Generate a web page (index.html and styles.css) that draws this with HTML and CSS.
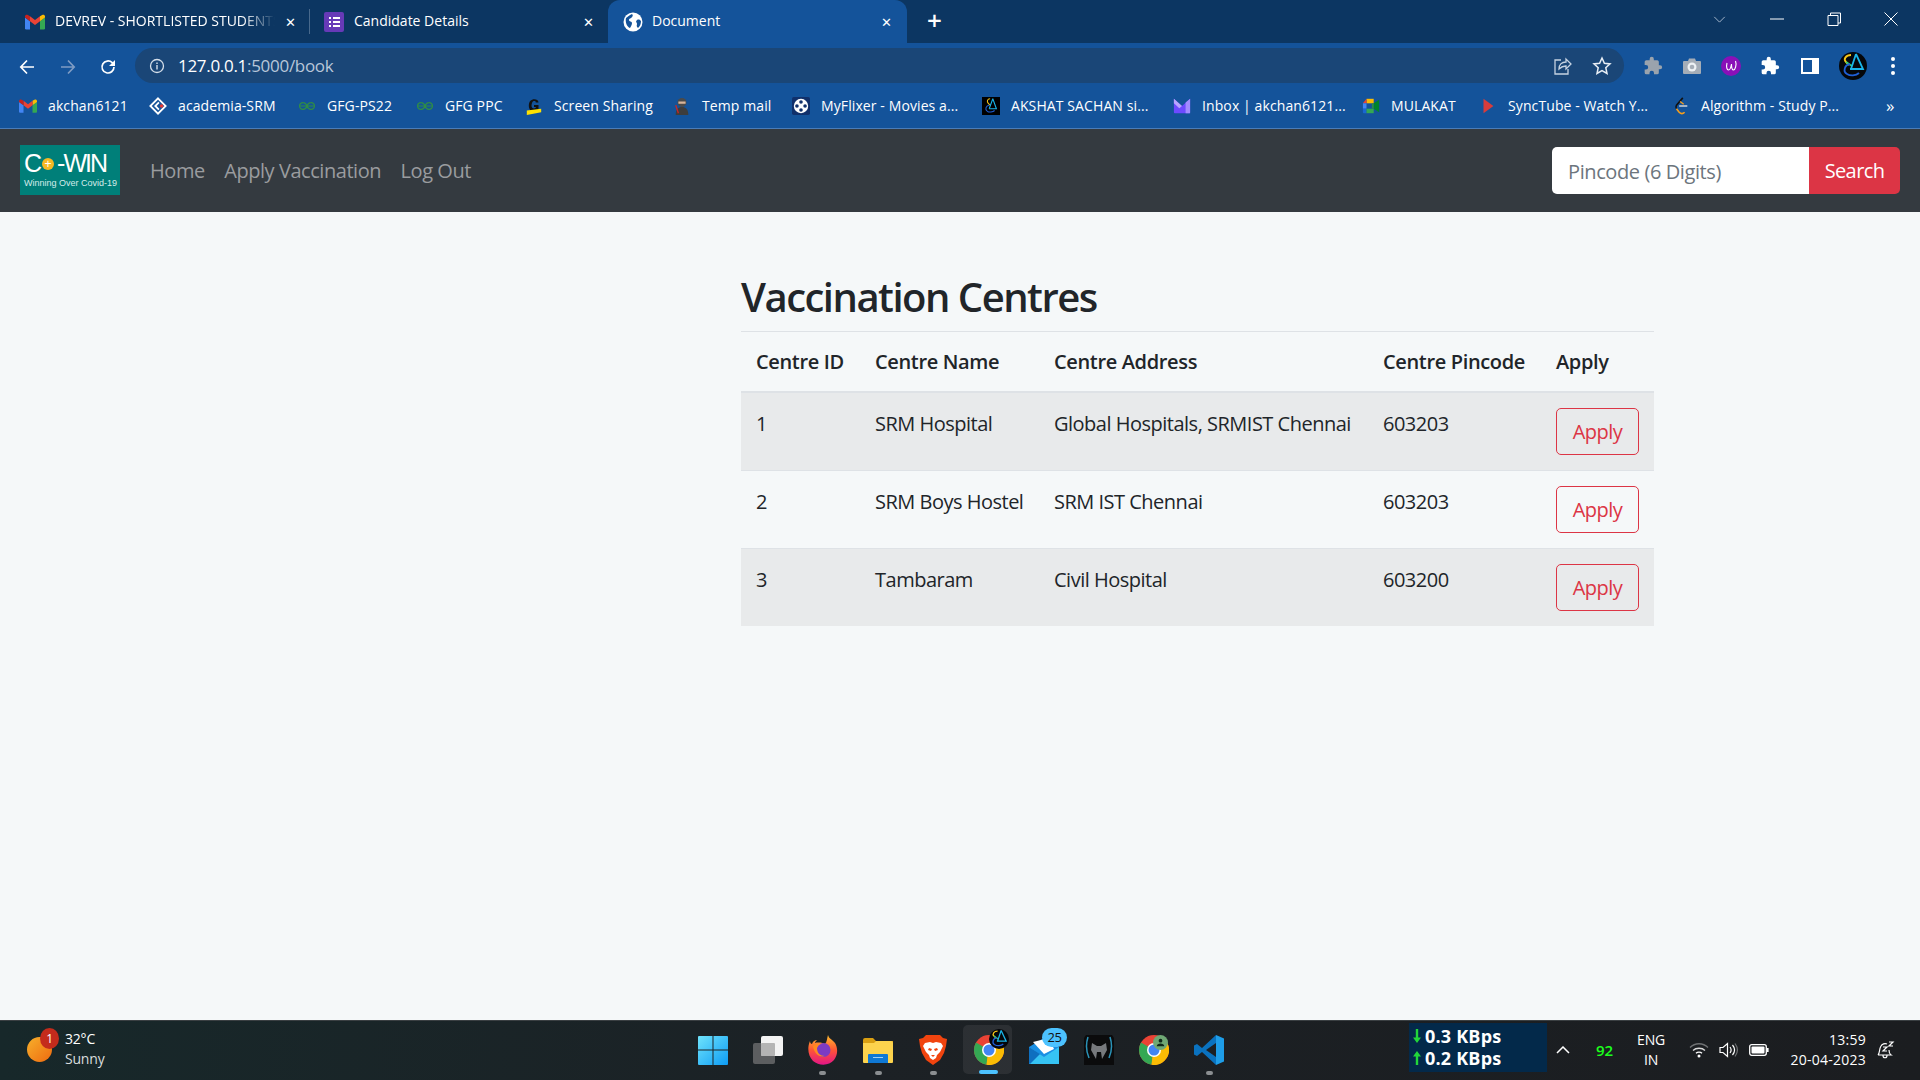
FILE: index.html
```html
<!DOCTYPE html>
<html lang="en">
<head>
    <meta charset="UTF-8">
    <meta name="viewport" content="width=device-width, initial-scale=1.0">
    <title>Document</title>
    <link rel="stylesheet" href="styles.css">
</head>
<body>
    <svg class="sprite" width="0" height="0">
        <symbol id="gmail" viewBox="0 0 24 18">
            <path fill="#4285f4" d="M1.500 18H6V8L0 3.500v13A1.500 1.500 0 0 0 1.500 18z"/>
            <path fill="#34a853" d="M18 18h4.500a1.500 1.500 0 0 0 1.500-1.500v-13L18 8z"/>
            <path fill="#fbbc04" d="M18 2v6l6-4.500V2.200C24 .5 22 -.4 20.600 .6z"/>
            <path fill="#ea4335" d="M6 8V2l6 4.500L18 2v6l-6 4.500z"/>
            <path fill="#c5221f" d="M0 2.200v1.300L6 8V2L3.400 .6C2 -.4 0 .5 0 2.200z"/>
        </symbol>
        <symbol id="puzzle" viewBox="0 0 24 24">
            <path fill="currentColor" d="M20.500 11H19V7a2 2 0 0 0-2-2h-4V3.500a2.500 2.500 0 0 0-5 0V5H4a2 2 0 0 0-2 2v3.800h1.500a2.700 2.700 0 0 1 0 5.400H2V20a2 2 0 0 0 2 2h3.800v-1.500a2.700 2.700 0 0 1 5.400 0V22H17a2 2 0 0 0 2-2v-4h1.500a2.500 2.500 0 0 0 0-5z"/>
        </symbol>
        <symbol id="gfg" viewBox="0 0 24 12">
            <path fill="none" stroke="#2f8d46" stroke-width="1.600" d="M1.500 6h21M12 6c-1-3-3-4.500-5.200-4.500A4.500 4.500 0 0 0 2 6a4.500 4.500 0 0 0 4.800 4.500C9 10.500 11 9 12 6zm0 0c1-3 3-4.500 5.200-4.500A4.500 4.500 0 0 1 22 6a4.500 4.500 0 0 1-4.800 4.500C15 10.500 13 9 12 6z"/>
        </symbol>
        <symbol id="sa" viewBox="0 0 28 28">
            <circle cx="14" cy="14" r="14" fill="#05070a"/>
            <path fill="none" stroke="#f5c518" stroke-width="1.800" d="M12 3C7 3 4 7 7 10l3 3"/>
            <path fill="none" stroke="#2ecc71" stroke-width="1.800" d="M7 10l6 4"/>
            <path fill="none" stroke="#19b5e8" stroke-width="1.800" d="M17 2l-5 15M17 2l7 15H11"/>
            <path fill="none" stroke="#1f5fd6" stroke-width="1.800" d="M11 12c-6 1-7 8-3 10 3 2 9 2 12-1"/>
        </symbol>
        <symbol id="chrome" viewBox="0 0 30 30">
            <circle cx="15" cy="15" r="15" fill="#ea4335"/>
            <path fill="#34a853" d="M2 7.500A15 15 0 0 0 12.500 29.800L15 15z"/>
            <path fill="#fbbc04" d="M28 7.500H15L12.500 29.800A15 15 0 0 0 28 7.500z"/>
            <circle cx="15" cy="15" r="7" fill="#fff"/>
            <circle cx="15" cy="15" r="5.500" fill="#4285f4"/>
        </symbol>
        <symbol id="arrow" viewBox="0 0 8 14">
            <path fill="currentColor" d="M2.800 0h2.400v8.500H8L4 14 0 8.500h2.800z"/>
        </symbol>
    </svg>

    <div class="browser">
        <div class="tabstrip">
            <div class="tab tab-first">
                <svg class="tab-icon"><use href="#gmail"/></svg>
                <span class="tab-title tab-title-fade">DEVREV - SHORTLISTED STUDENTS</span>
                <span class="tab-close">&#10005;</span>
            </div>
            <div class="tab-sep"></div>
            <div class="tab tab-second">
                <svg class="tab-icon" viewBox="0 0 20 20"><rect width="20" height="20" rx="2" fill="#673ab7"/><path fill="#fff" d="M5 5h2v2H5zM9 5h7v2H9zM5 9h2v2H5zM9 9h7v2H9zM5 13h2v2H5zM9 13h7v2H9z"/></svg>
                <span class="tab-title">Candidate Details</span>
                <span class="tab-close">&#10005;</span>
            </div>
            <div class="tab tab-active">
                <svg class="tab-icon" viewBox="0 0 20 20"><circle cx="10" cy="10" r="9.500" fill="#fff"/><path fill="#14539a" d="M3 6c2-1 3-3 6-4 1 1 1 2 0 3-1 2-3 1-3 3 0 2 3 1 3 3 0 2-1 3-2 5C4 15 2 10 3 6zM14 8c2-1 3 0 4 1 0 3-1 5-3 7-2-2-1-3-1-4 0-2-2-2 0-4z"/></svg>
                <span class="tab-title">Document</span>
                <span class="tab-close">&#10005;</span>
            </div>
            <span class="tab-new">+</span>
            <div class="window-btns">
                <svg viewBox="0 0 14 8" class="win-chevron"><path fill="none" stroke="#b7c6d8" d="M1 1l6 6 6-6"/></svg>
                <svg viewBox="0 0 14 14" class="win-btn"><path stroke="#fff" d="M0 7h14"/></svg>
                <svg viewBox="0 0 14 14" class="win-btn"><path fill="none" stroke="#fff" d="M1 3.500h10v10H1zM3.500 3.500V1H13.500v10H11"/></svg>
                <svg viewBox="0 0 14 14" class="win-btn"><path stroke="#fff" d="M.5.500l13 13M13.500.500l-13 13"/></svg>
            </div>
        </div>

        <div class="toolbar">
            <div class="nav-btns">
                <svg viewBox="0 0 16 16"><path fill="none" stroke="#fff" stroke-width="1.700" d="M15 8H2M8 1.500L1.800 8 8 14.500"/></svg>
                <svg viewBox="0 0 16 16"><path fill="none" stroke="#7f9cc4" stroke-width="1.700" d="M1 8h13M8 1.500L14.200 8 8 14.500"/></svg>
                <svg viewBox="0 0 16 16"><path fill="none" stroke="#fff" stroke-width="1.700" d="M14 8a6 6 0 1 1-1.800-4.300L14 5.500"/><path fill="#fff" d="M15 1v6H9z"/></svg>
            </div>
            <div class="omnibox">
                <svg class="omni-info" viewBox="0 0 16 16"><circle cx="8" cy="8" r="6.500" fill="none" stroke="#d5dfea" stroke-width="1.300"/><path fill="#d5dfea" d="M7.300 7h1.400v4.500H7.300zM7.300 4.500h1.400v1.400H7.300z"/></svg>
                <span class="omni-url">127.0.0.1<span class="omni-path">:5000/book</span></span>
                <svg class="omni-icon" viewBox="0 0 20 20"><path fill="none" stroke="#c6d3e2" stroke-width="1.300" d="M9 4H3v14h13v-5M7 13c0-5 3-7 7-7V3l5 5-5 5v-3c-3 0-5 1-7 3z"/></svg>
                <svg class="omni-icon omni-star" viewBox="0 0 20 20"><path fill="none" stroke="#e8eef5" stroke-width="1.500" d="M10 2l2.400 5.300 5.600.6-4.200 3.800 1.200 5.700L10 14.500l-5 2.900 1.200-5.700L2 7.900l5.600-.6z"/></svg>
            </div>
            <div class="ext-btns">
                <svg class="ext-grey"><use href="#puzzle"/></svg>
                <svg viewBox="0 0 20 20"><path fill="#a5adb7" d="M2 5h4l1-2.500h6L14 5h4a1 1 0 0 1 1 1v11a1 1 0 0 1-1 1H2a1 1 0 0 1-1-1V6a1 1 0 0 1 1-1z"/><circle cx="10" cy="11" r="4.500" fill="#eef1f4"/><circle cx="10" cy="11" r="2.300" fill="#a5adb7"/></svg>
                <svg viewBox="0 0 20 20"><circle cx="10" cy="10" r="10" fill="#8a10b8"/><path fill="none" stroke="#fff" stroke-width="1.100" d="M6 7c-1 4 0 7 1.500 7S10 11 10.500 8c0 4 .5 6 2 6S16 9 14.500 5"/></svg>
                <svg class="ext-white"><use href="#puzzle"/></svg>
                <svg viewBox="0 0 20 20"><path fill="#fff" d="M1 2h18v16H1zM3 4v12h9V4z"/></svg>
                <svg class="ext-avatar"><use href="#sa"/></svg>
                <svg class="ext-dots" viewBox="0 0 6 20"><circle cx="3" cy="3" r="2" fill="#fff"/><circle cx="3" cy="10" r="2" fill="#fff"/><circle cx="3" cy="17" r="2" fill="#fff"/></svg>
            </div>
        </div>

        <div class="bookmarks">
            <div class="bookmark"><svg><use href="#gmail"/></svg><span>akchan6121</span></div>
            <div class="bookmark"><svg viewBox="0 0 20 20"><path fill="none" stroke="#fff" stroke-width="2" d="M10 1.500L18.500 10 10 18.500 1.500 10z"/><path fill="none" stroke="#fff" stroke-width="2" d="M11 6l-4 4 4 4"/><circle cx="14" cy="10" r="2" fill="#e53935"/></svg><span>academia-SRM</span></div>
            <div class="bookmark"><svg><use href="#gfg"/></svg><span>GFG-PS22</span></div>
            <div class="bookmark"><svg><use href="#gfg"/></svg><span>GFG PPC</span></div>
            <div class="bookmark"><svg viewBox="0 0 20 20"><path fill="#111" d="M15 6h-3c0-2-3-2-4 0-1 2-1 5 0 6 1 1 3 1 4 0v-1h-2V9h5v7H8C3 15 3 4 8 3c3-1 7 0 7 3z"/><path fill="#ffe100" d="M2 15l16-2v4L2 20z"/></svg><span>Screen Sharing</span></div>
            <div class="bookmark"><svg viewBox="0 0 20 20"><circle cx="10" cy="6" r="5" fill="#4a4a4a"/><rect x="6" y="5" width="8" height="2.500" fill="#d9b59a"/><path fill="#3d3d3d" d="M3 20c0-7 3-9 7-9s7 2 7 9z"/><path stroke="#c62828" stroke-width="1.500" d="M3 9l3 9"/></svg><span>Temp mail</span></div>
            <div class="bookmark"><svg viewBox="0 0 20 20"><rect width="20" height="20" rx="2" fill="#10306b"/><circle cx="10" cy="10" r="8" fill="#fff"/><circle cx="10" cy="5.500" r="2" fill="#10306b"/><circle cx="10" cy="14.500" r="2" fill="#10306b"/><circle cx="5.500" cy="10" r="2" fill="#10306b"/><circle cx="14.500" cy="10" r="2" fill="#10306b"/></svg><span>MyFlixer - Movies a...</span></div>
            <div class="bookmark"><svg viewBox="0 0 20 20"><rect width="20" height="20" fill="#000"/><path fill="none" stroke="#f5c518" stroke-width="1.200" d="M9 2C6 2 5 5 7 7l2 2"/><path fill="none" stroke="#19b5e8" stroke-width="1.200" d="M12 2L8 13M12 2l4 11H8"/><path fill="none" stroke="#1f5fd6" stroke-width="1.200" d="M8 9c-4 1-5 5-2 7 2 1 6 1 8-1"/></svg><span>AKSHAT SACHAN si...</span></div>
            <div class="bookmark"><svg viewBox="0 0 20 20"><path fill="#6d4aff" d="M1 2l9 8 9-8v15a1 1 0 0 1-1 1H2a1 1 0 0 1-1-1z"/><path fill="#b8a4ff" d="M1 2l9 8-3 2.500L1 7z"/><path fill="#a28bff" d="M14 6l5-4v16h-5z"/></svg><span>Inbox | akchan6121...</span></div>
            <div class="bookmark"><svg viewBox="0 0 20 20"><path fill="#fbbc04" d="M5 2h8v5H5z"/><path fill="#ea4335" d="M5 2v5H1z"/><path fill="#4285f4" d="M1 7h4v6H1z"/><path fill="#1967d2" d="M1 13h4v5H2a1 1 0 0 1-1-1z"/><path fill="#34a853" d="M5 13h8v5H5z"/><path fill="#00832d" d="M13 7l6-4v14l-6-4z"/><path fill="#2f8d46" d="M11 7h2v6h-2z"/></svg><span>MULAKAT</span></div>
            <div class="bookmark"><svg viewBox="0 0 20 20"><path fill="#d73c3c" d="M5 2l11 8-11 8z"/></svg><span>SyncTube - Watch Y...</span></div>
            <div class="bookmark"><svg viewBox="0 0 20 20"><path fill="none" stroke="#111" stroke-width="1.800" d="M12 1L5 9c-1 2-1 3 0 4"/><path fill="none" stroke="#f89f1b" stroke-width="1.800" d="M5 13l3 4c2 2 4 2 6 0"/><path fill="none" stroke="#c7ccd3" stroke-width="1.800" d="M8 10h9"/><path fill="none" stroke="#f89f1b" stroke-width="1.500" d="M9 5l4 3"/></svg><span>Algorithm - Study P...</span></div>
            <span class="bookmark-more">&raquo;</span>
        </div>
    </div>

    <nav class="navbar">
        <div class="logo">
            <div class="logo-name">C<span class="logo-plus">+</span>-WIN</div>
            <div class="logo-sub">Winning Over Covid-19</div>
        </div>
        <ul class="nav-links">
            <li>Home</li>
            <li>Apply Vaccination</li>
            <li>Log Out</li>
        </ul>
        <form class="search">
            <input class="search-input" type="text" placeholder="Pincode (6 Digits)">
            <button class="search-btn" type="button">Search</button>
        </form>
    </nav>

    <main class="content">
        <h1>Vaccination Centres</h1>
        <table class="centres">
            <thead>
                <tr>
                    <th class="col-id">Centre ID</th>
                    <th class="col-name">Centre Name</th>
                    <th class="col-address">Centre Address</th>
                    <th class="col-pin">Centre Pincode</th>
                    <th>Apply</th>
                </tr>
            </thead>
            <tbody>
                <tr>
                    <td>1</td>
                    <td>SRM Hospital</td>
                    <td>Global Hospitals, SRMIST Chennai</td>
                    <td>603203</td>
                    <td><button class="apply-btn" type="button">Apply</button></td>
                </tr>
                <tr>
                    <td>2</td>
                    <td>SRM Boys Hostel</td>
                    <td>SRM IST Chennai</td>
                    <td>603203</td>
                    <td><button class="apply-btn" type="button">Apply</button></td>
                </tr>
                <tr>
                    <td>3</td>
                    <td>Tambaram</td>
                    <td>Civil Hospital</td>
                    <td>603200</td>
                    <td><button class="apply-btn" type="button">Apply</button></td>
                </tr>
            </tbody>
        </table>
    </main>

    <footer class="taskbar">
        <div class="weather">
            <div class="weather-icon">
                <span class="weather-sun"></span>
                <span class="weather-badge">1</span>
            </div>
            <div class="weather-text">
                <div>32&deg;C</div>
                <div class="weather-sub">Sunny</div>
            </div>
        </div>

        <div class="task-icons">
            <div class="task-cell">
                <svg viewBox="0 0 30 30"><defs><linearGradient id="winblue" x1="0" y1="0" x2="1" y2="1"><stop offset="0" stop-color="#6fe3fb"/><stop offset="1" stop-color="#0d9cf5"/></linearGradient></defs><path fill="url(#winblue)" d="M1 1h13.500v13.500H0V2a1 1 0 0 1 1-1zM15.500 1H29a1 1 0 0 1 1 1v12.500H15.500zM0 15.500h14.500V30H1a1 1 0 0 1-1-1zM15.500 15.500H30V29a1 1 0 0 1-1 1H15.500z"/></svg>
            </div>
            <div class="task-cell">
                <svg viewBox="0 0 30 30"><rect y="8" width="22" height="21" rx="2" fill="#5c5e60"/><rect x="8" y="1" width="22" height="20" rx="2" fill="#f3f3f3"/><rect x="8" y="8" width="14" height="13" rx="1" fill="#b4b4b4"/></svg>
            </div>
            <div class="task-cell task-dot">
                <svg viewBox="0 0 30 30"><defs><linearGradient id="ffox" x1="0" y1="0" x2="0" y2="1"><stop offset="0" stop-color="#ffbd2e"/><stop offset=".5" stop-color="#ff5634"/><stop offset="1" stop-color="#e31587"/></linearGradient></defs><path fill="url(#ffox)" d="M20 0c1 4 4 4 7 8 3 5 3 12-1 17-5 6-15 6-21 1C0 21-1 13 2 6c0 2 1 3 2 3 1-3 3-4 5-4-1 1-2 2-2 3 3-1 9 0 10 1 2-2 2-6 3-9z"/><circle cx="15.500" cy="15" r="7" fill="#7c3bc4"/><path fill="#ff8a1f" d="M5 11c3-2 6-3 9-2-3 0-4 2-5 4 0 5 3 8 8 8-6 2-11-3-12-10z"/></svg>
            </div>
            <div class="task-cell task-dot">
                <svg viewBox="0 0 30 30"><path fill="#d99f12" d="M0 5a2 2 0 0 1 2-2h8l3 3h17v8H0z"/><path fill="#fcd34d" d="M0 8h11l2-2h15a2 2 0 0 1 2 2v19a1 1 0 0 1-1 1H1a1 1 0 0 1-1-1z"/><path fill="#0f78d4" d="M5 20a1 1 0 0 1 1-1h18a1 1 0 0 1 1 1v8H5z"/><path stroke="#9ed0f5" stroke-width="1" d="M10 22.500h10"/></svg>
            </div>
            <div class="task-cell task-dot">
                <svg viewBox="0 0 30 30"><path fill="#f1440f" d="M8 0h14l3 3 4 1-1 7-2 7-4 7-7 5-7-5-4-7-2-7-1-7 4-1z"/><path fill="#fff" d="M7 8l5-1 3 1 3-1 5 1 2 3-3 6-3 3-1 3-3 2-3-2-1-3-3-3-3-6z"/><path fill="#f1440f" d="M11 13l3 1-1 2-3-1zM19 13l-3 1 1 2 3-1zM13 20h4l-2 2z"/></svg>
            </div>
            <div class="task-cell task-active">
                <svg><use href="#chrome"/></svg>
                <svg class="task-over task-over-sa"><use href="#sa"/></svg>
            </div>
            <div class="task-cell">
                <svg viewBox="0 0 30 30"><path fill="#1a8fe3" d="M0 12L15 3l15 9v16a1 1 0 0 1-1 1H1a1 1 0 0 1-1-1z"/><path fill="#fff" d="M4 7l16-4 5 11-10 5z"/><path fill="#36c3f3" d="M0 12l15 10 15-10v17H1a1 1 0 0 1-1-1z"/><path fill="#0f6fc0" d="M0 12v16a1 1 0 0 0 1 1l10-10z"/></svg>
                <span class="mail-badge">25</span>
            </div>
            <div class="task-cell">
                <svg viewBox="0 0 30 30"><path fill="#0b0b0c" d="M2 0h26l2 3v27H0V3z"/><path fill="none" stroke="#2a93b8" stroke-width="1.500" d="M4 2C2 8 2 16 5 23M26 2c2 6 2 14-1 21"/><path fill="#77797c" d="M8 8l5 3h4l5-3 1 7-5 9-1-7h-4l-1 7-5-9z"/></svg>
            </div>
            <div class="task-cell">
                <svg><use href="#chrome"/></svg>
                <svg class="task-over task-over-user" viewBox="0 0 16 16"><circle cx="8" cy="8" r="8" fill="#6fa874"/><circle cx="8" cy="6" r="2" fill="#10281a"/><path fill="#10281a" d="M4 12c0-2 2-3 4-3s4 1 4 3z"/></svg>
            </div>
            <div class="task-cell task-dot">
                <svg viewBox="0 0 30 30"><path fill="#0a72bf" d="M22 0L8 13 3 9 0 10.500v9L3 21l5-4 14 13v-8l-10-7 10-7z"/><path fill="#1e9de8" d="M22 0l8 3.500v23L22 30z"/></svg>
            </div>
        </div>

        <div class="net-speed">
            <div class="net-row"><svg class="net-arrow"><use href="#arrow"/></svg>0.3 KBps</div>
            <div class="net-row"><svg class="net-arrow net-up"><use href="#arrow"/></svg>0.2 KBps</div>
        </div>

        <div class="tray">
            <svg class="tray-chevron" viewBox="0 0 14 8"><path fill="none" stroke="#fff" stroke-width="1.500" d="M1 7l6-6 6 6"/></svg>
            <span class="tray-num">92</span>
            <div class="tray-lang"><div>ENG</div><div>IN</div></div>
            <svg class="tray-wifi" viewBox="0 0 20 16"><path fill="none" stroke="#6f7173" stroke-width="1.300" d="M1 5.500c5-5 13-5 18 0"/><path fill="none" stroke="#d9d9d9" stroke-width="1.300" d="M4 8.500c3-3 9-3 12 0"/><path fill="none" stroke="#fff" stroke-width="1.300" d="M7 11.300c1.500-1.500 4.500-1.500 6 0"/><circle cx="10" cy="14" r="1.500" fill="#fff"/></svg>
            <svg class="tray-sound" viewBox="0 0 20 16"><path fill="none" stroke="#fff" stroke-width="1.200" d="M1 5.500h3L8.500 1.500v13L4 10.500H1zM11 5c1.500 2 1.500 4 0 6M13.500 3c2.500 3 2.500 7 0 10"/><path fill="none" stroke="#6f7173" stroke-width="1.200" d="M16 1.500c3 4 3 9 0 13"/></svg>
            <svg class="tray-battery" viewBox="0 0 20 12"><rect x=".7" y=".7" width="16.600" height="10.600" rx="2" fill="none" stroke="#fff" stroke-width="1.300"/><rect x="2.500" y="2.500" width="13" height="7" rx="1" fill="#fff"/><rect x="18" y="4" width="1.600" height="4" fill="#fff"/></svg>
            <div class="tray-clock"><div>13:59</div><div>20-04-2023</div></div>
            <svg class="tray-bell" viewBox="0 0 20 20"><path fill="none" stroke="#fff" stroke-width="1.200" d="M3 15c2-2 1-6 3-9 1-2 4-3 6-2M3 15h13c-1.500-1-2-3-2-5M8 15.500c0 3 4 3 4 0"/><path fill="none" stroke="#fff" stroke-width="1.200" d="M8 7h4l-4 4h4M14 2h4l-4 4h4"/></svg>
        </div>
    </footer>
</body>
</html>
```

FILE: styles.css
```css
* {
    box-sizing: border-box;
}
body {
    font-family: "Open Sans", "Noto Sans", sans-serif;
    margin: 0;
    padding: 0;
    height: 1080px;
    overflow: hidden;
    display: flex;
    flex-direction: column;
    background-color: #f5f8f9;
    color: #212529;
}
.sprite {
    position: absolute;
}

/* browser chrome */
.tabstrip {
    height: 43px;
    padding-left: 8px;
    background-color: #0c3662;
    display: flex;
    align-items: stretch;
    color: white;
    font-size: 14px;
}
.tab {
    width: 299px;
    padding: 0 13px 0 17px;
    display: flex;
    align-items: center;
    gap: 10px;
}
.tab-first {
    padding-right: 9px;
}
.tab-second {
    width: 297px;
    padding: 0 12px 0 13px;
}
.tab-active {
    background-color: #14539a;
    border-radius: 12px 12px 0 0;
    padding-left: 15px;
    gap: 9px;
}
.tab-icon {
    width: 20px;
    height: 20px;
    flex: none;
}
.tab-title {
    flex: 1;
    padding-bottom: 2px;
    white-space: nowrap;
    overflow: hidden;
}
.tab-title-fade {
    -webkit-mask-image: linear-gradient(to right, #000 85%, transparent);
    mask-image: linear-gradient(to right, #000 85%, transparent);
}
.tab-close {
    font-size: 13px;
    width: 13px;
}
.tab-sep {
    width: 1px;
    margin: 9px 1px 9px 2px;
    background-color: #48698c;
}
.tab-new {
    font-size: 26px;
    font-weight: 600;
    margin-left: 20px;
    line-height: 40px;
}
.window-btns {
    margin-left: auto;
    display: flex;
    align-items: center;
    padding-right: 22px;
    padding-bottom: 5px;
}
.win-chevron {
    width: 13px;
    height: 7px;
    margin-right: 44px;
}
.win-btn {
    width: 14px;
    height: 14px;
    margin-left: 43px;
}
.win-btn:nth-child(2) {
    margin-left: 0;
}
.toolbar {
    height: 42px;
    padding-top: 5px;
    background-color: #14539a;
    display: flex;
    align-items: stretch;
}
.nav-btns {
    width: 135px;
    padding: 0 19px;
    display: flex;
    align-items: center;
    justify-content: space-between;
}
.nav-btns svg {
    width: 16px;
    height: 16px;
}
.omnibox {
    width: 1489px;
    height: 35px;
    background-color: #1a4677;
    border-radius: 18px;
    padding: 0 13px 0 14px;
    display: flex;
    align-items: center;
}
.omni-info {
    width: 16px;
    height: 16px;
    flex: none;
}
.omni-url {
    margin-left: 13px;
    flex: 1;
    font-size: 17px;
    color: white;
    letter-spacing: -0.3px;
}
.omni-path {
    color: #b8c7d9;
}
.omni-icon {
    width: 20px;
    height: 20px;
}
.omni-star {
    margin-left: 20px;
    margin-right: -1px;
}
.ext-btns {
    flex: 1;
    display: flex;
    align-items: center;
    padding: 0 24px 0 19px;
    justify-content: space-between;
    height: 35px;
}
.ext-btns svg {
    width: 20px;
    height: 20px;
}
.ext-grey {
    color: #9aa3ad;
}
.ext-white {
    color: white;
}
.ext-btns .ext-avatar {
    width: 28px;
    height: 28px;
    margin-right: 4px;
}
.ext-btns .ext-dots {
    width: 6px;
}
.bookmarks {
    height: 44px;
    padding-left: 19px;
    padding-bottom: 2px;
    background-color: #14539a;
    border-bottom: 1px solid #4a7cb8;
    display: grid;
    grid-template-columns: 130px 149px 118px 109px 148px 119px 190px 191px 189px 117px 193px 214px 30px;
    align-items: center;
    color: white;
    font-size: 14px;
    letter-spacing: 0.1px;
}
.bookmark {
    display: flex;
    align-items: center;
    gap: 11px;
    white-space: nowrap;
}
.bookmark svg {
    width: 18px;
    height: 18px;
    flex: none;
}
.bookmark-more {
    font-size: 17px;
}

/* page navbar */
.navbar {
    height: 83px;
    padding: 0 20px;
    background-color: #343a40;
    display: flex;
    align-items: center;
}
.logo {
    width: 100px;
    height: 50px;
    margin-top: -2px;
    background-color: #007f79;
    color: white;
    padding: 6px 0 0 4px;
    font-family: "Liberation Sans", sans-serif;
}
.logo-name {
    font-size: 25px;
    line-height: 24px;
    letter-spacing: -2px;
    display: flex;
    align-items: center;
}
.logo-plus {
    width: 12px;
    height: 12px;
    margin: 3px 3px 0 2px;
    border-radius: 50%;
    background-color: #f7b924;
    font-size: 12px;
    line-height: 12px;
    letter-spacing: 0;
    text-align: center;
}
.logo-sub {
    font-size: 9px;
    margin-top: 3px;
    color: #d5ecea;
    white-space: nowrap;
}
.nav-links {
    list-style-type: none;
    margin: 0 0 0 30px;
    padding: 0;
    display: flex;
    gap: 19.500px;
    font-size: 20px;
    letter-spacing: -0.45px;
    color: #9a9c9f;
}
.search {
    margin-left: auto;
    display: flex;
}
.search-input {
    width: 257px;
    height: 47px;
    padding: 2px 16px 0;
    border: none;
    border-radius: 5px 0 0 5px;
    font-family: inherit;
    font-size: 20px;
    letter-spacing: -0.4px;
    background-color: white;
}
.search-input::placeholder {
    color: #6c757d;
}
.search-btn {
    width: 91px;
    height: 47px;
    border: none;
    border-radius: 0 5px 5px 0;
    background-color: #dc3545;
    color: white;
    font-family: inherit;
    font-size: 20px;
    letter-spacing: -0.6px;
}

/* main content */
.content {
    flex: 1;
    padding: 61px 0 0 741px;
}
h1 {
    margin: 0 0 10px;
    font-size: 40px;
    line-height: 48px;
    font-weight: 600;
    letter-spacing: -1.5px;
}
.centres {
    width: 913px;
    table-layout: fixed;
    border-collapse: separate;
    border-spacing: 0;
    font-size: 20px;
    letter-spacing: -0.5px;
}
.col-id {
    width: 119px;
}
.col-name {
    width: 179px;
}
.col-address {
    width: 329px;
}
.col-pin {
    width: 173px;
}
.centres th {
    height: 62px;
    padding: 0 15px;
    text-align: left;
    font-weight: 600;
    letter-spacing: -0.35px;
    border-top: 1px solid #dee2e6;
    border-bottom: 2px solid #dee2e6;
}
.centres td {
    height: 78px;
    padding: 15px;
    line-height: 32px;
    vertical-align: top;
    white-space: nowrap;
    border-top: 1px solid #dee2e6;
}
.centres tbody tr:first-child td {
    height: 77px;
    border-top: none;
}
.centres tbody tr:nth-child(odd) {
    background-color: #e8eaeb;
}
.apply-btn {
    display: block;
    width: 83px;
    height: 47px;
    padding: 0;
    background: transparent;
    border: 1px solid #dc3545;
    border-radius: 5px;
    color: #dc3545;
    font-family: inherit;
    font-size: 20px;
    letter-spacing: -0.5px;
}

/* windows taskbar */
.taskbar {
    height: 60px;
    flex: none;
    background: linear-gradient(to right, #17282a, #1c2125 45%, #1b1d20);
    border-top: 1px solid #3a3f42;
    display: flex;
    color: white;
    font-size: 14px;
    letter-spacing: -0.2px;
}
.weather {
    width: 685px;
    display: flex;
    padding-left: 27px;
}
.weather-icon {
    position: relative;
    width: 38px;
}
.weather-sun {
    display: block;
    width: 25px;
    height: 25px;
    margin-top: 16px;
    border-radius: 50%;
    background: linear-gradient(135deg, #f7b02b, #ee6a10);
}
.weather-badge {
    position: absolute;
    left: 13px;
    top: 7px;
    width: 19px;
    height: 21px;
    border-radius: 50%;
    background-color: #c42b1c;
    font-size: 12px;
    line-height: 21px;
    text-align: center;
}
.weather-text {
    padding-top: 8px;
    line-height: 20px;
}
.weather-sub {
    color: #d9dcdd;
}
.task-icons {
    width: 552px;
    display: grid;
    grid-template-columns: repeat(10, 55.2px);
}
.task-cell {
    position: relative;
    padding-top: 14px;
    display: flex;
    flex-direction: column;
    align-items: center;
}
.task-cell svg {
    width: 30px;
    height: 30px;
    flex: none;
}
.task-dot::after {
    content: "";
    width: 7px;
    height: 4px;
    margin-top: 6px;
    border-radius: 2px;
    background-color: #8b8e91;
}
.task-active::before {
    content: "";
    position: absolute;
    left: 2px;
    top: 4px;
    width: 49px;
    height: 49px;
    border-radius: 5px;
    background-color: rgba(255, 255, 255, 0.07);
}
.task-active::after {
    content: "";
    width: 19px;
    height: 4px;
    margin-top: 5px;
    border-radius: 2px;
    background-color: #4cc2ff;
    z-index: 1;
}
.task-active svg {
    z-index: 1;
}
.task-cell .task-over {
    position: absolute;
    z-index: 2;
}
.task-cell .task-over-sa {
    left: 28px;
    top: 8px;
    width: 20px;
    height: 20px;
}
.task-cell .task-over-user {
    left: 26px;
    top: 14px;
    width: 15px;
    height: 15px;
}
.mail-badge {
    position: absolute;
    left: 26px;
    top: 7px;
    width: 25px;
    height: 19px;
    border-radius: 10px;
    background-color: #4cc2ff;
    color: #111;
    font-size: 13px;
    line-height: 19px;
    text-align: center;
}
.net-speed {
    margin-left: 172px;
    margin-top: 2px;
    width: 138px;
    height: 49px;
    background-color: #03294a;
    padding: 2px 0 0 4px;
    font-size: 18px;
    font-weight: 700;
    line-height: 22px;
    letter-spacing: 0.2px;
}
.net-row {
    display: flex;
    align-items: center;
}
.net-arrow {
    width: 8px;
    height: 14px;
    margin-right: 4px;
    color: #22d63a;
}
.net-up {
    transform: rotate(180deg);
}
.tray {
    flex: 1;
    display: flex;
    align-items: center;
    padding-bottom: 2px;
}
.tray-chevron {
    width: 14px;
    height: 8px;
    margin-left: 9px;
}
.tray-num {
    margin-left: 26px;
    width: 18px;
    color: #1cff1c;
    font-weight: 600;
    font-size: 15px;
}
.tray-lang {
    margin-left: 17px;
    width: 40px;
    text-align: center;
    line-height: 20px;
}
.tray-wifi {
    width: 20px;
    height: 16px;
    margin-left: 18px;
}
.tray-sound {
    width: 20px;
    height: 16px;
    margin-left: 10px;
}
.tray-battery {
    width: 20px;
    height: 12px;
    margin-left: 10px;
}
.tray-clock {
    width: 90px;
    margin-left: 7px;
    text-align: right;
    line-height: 20px;
    white-space: nowrap;
    letter-spacing: 0.25px;
}
.tray-bell {
    width: 20px;
    height: 20px;
    margin-left: 9px;
}
```
